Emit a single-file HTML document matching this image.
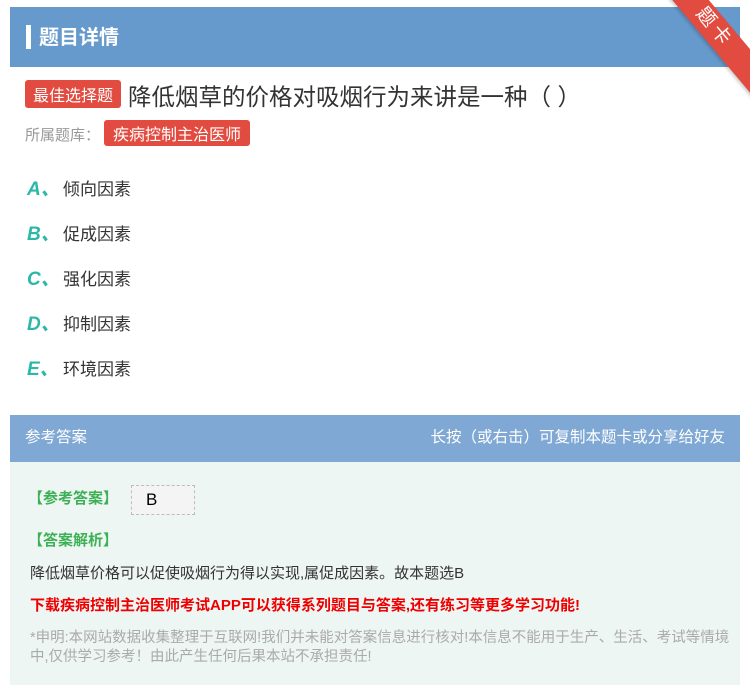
<!DOCTYPE html>
<html><head><meta charset="utf-8"><style>
body{margin:0;width:750px;height:685px;background:#fff;font-family:"Liberation Sans","Noto Sans CJK SC",sans-serif;position:relative;overflow:hidden}
.hd{position:absolute;left:10px;top:7px;width:730px;height:60px;background:#6699cc}
.hd .bar{position:absolute;left:16px;top:18px;width:5px;height:24px;background:#fff}
.hd .t{position:absolute;left:29px;top:14px;color:#fff;font-size:20px;font-weight:bold}
.rib{position:absolute;right:-44px;top:14px;width:160px;height:28px;background:#e24b3f;transform:rotate(50deg);color:#fff;text-align:center;font-size:19px;line-height:28px;letter-spacing:4px;box-shadow:0 2px 3px rgba(0,0,0,.2)}
.tag{display:inline-block;background:#e24b3f;color:#fff;border-radius:3px}
.q{position:absolute;left:25px;top:78px;font-size:23.5px;color:#333}
.q .tag{font-size:16px;padding:2px 8px;vertical-align:4px;margin-right:7px}
.lib{position:absolute;left:25px;top:120px;font-size:15px;color:#999}
.lib .tag{font-size:16px;padding:1px 9px;margin-left:4px;color:#fff}
.op{position:absolute;left:27px;font-size:17px;color:#333}
.op b{color:#2bb8a8;font-style:italic;font-size:19px;display:inline-block;width:36px}
.ans{position:absolute;left:10px;top:415px;width:730px;height:270px;background:#eef6f4}
.ah{height:47px;background:#7fa8d4;color:#fff;font-size:15.5px;line-height:46px;padding:0 15px}
.ah span{float:right}
.g{color:#3cb054;font-weight:bold;font-size:15px;position:absolute;left:18px}
.bx{position:absolute;left:121px;top:70px;width:64px;height:30px;background:#f4f4f4;border:1px dashed #bbb;font-size:17px;padding-left:14px;box-sizing:border-box;line-height:28px}
.ex{position:absolute;left:20px;top:147px;font-size:15px;color:#333}
.dl{position:absolute;left:20px;top:179px;font-size:15px;color:#e00;font-weight:bold}
.st{position:absolute;left:20px;top:214px;width:700px;font-size:14.5px;color:#aaa;line-height:19px}
</style></head><body>
<div class="hd"><div class="bar"></div><div class="t">题目详情</div></div>
<div class="rib">题卡</div>
<div class="q"><span class="tag">最佳选择题</span>降低烟草的价格对吸烟行为来讲是一种（ ）</div>
<div class="lib">所属题库：<span class="tag">疾病控制主治医师</span></div>
<div class="op" style="top:174px"><b>A、</b>倾向因素</div>
<div class="op" style="top:219px"><b>B、</b>促成因素</div>
<div class="op" style="top:264px"><b>C、</b>强化因素</div>
<div class="op" style="top:309px"><b>D、</b>抑制因素</div>
<div class="op" style="top:354px"><b>E、</b>环境因素</div>
<div class="ans">
<div class="ah">参考答案<span>长按（或右击）可复制本题卡或分享给好友</span></div>
<div class="g" style="top:72px">【参考答案】</div>
<div class="bx">B</div>
<div class="g" style="top:114px">【答案解析】</div>
<div class="ex">降低烟草价格可以促使吸烟行为得以实现,属促成因素。故本题选B</div>
<div class="dl">下载疾病控制主治医师考试APP可以获得系列题目与答案,还有练习等更多学习功能!</div>
<div class="st">*申明:本网站数据收集整理于互联网!我们并未能对答案信息进行核对!本信息不能用于生产、生活、考试等情境中,仅供学习参考！由此产生任何后果本站不承担责任!</div>
</div>
</body></html>
